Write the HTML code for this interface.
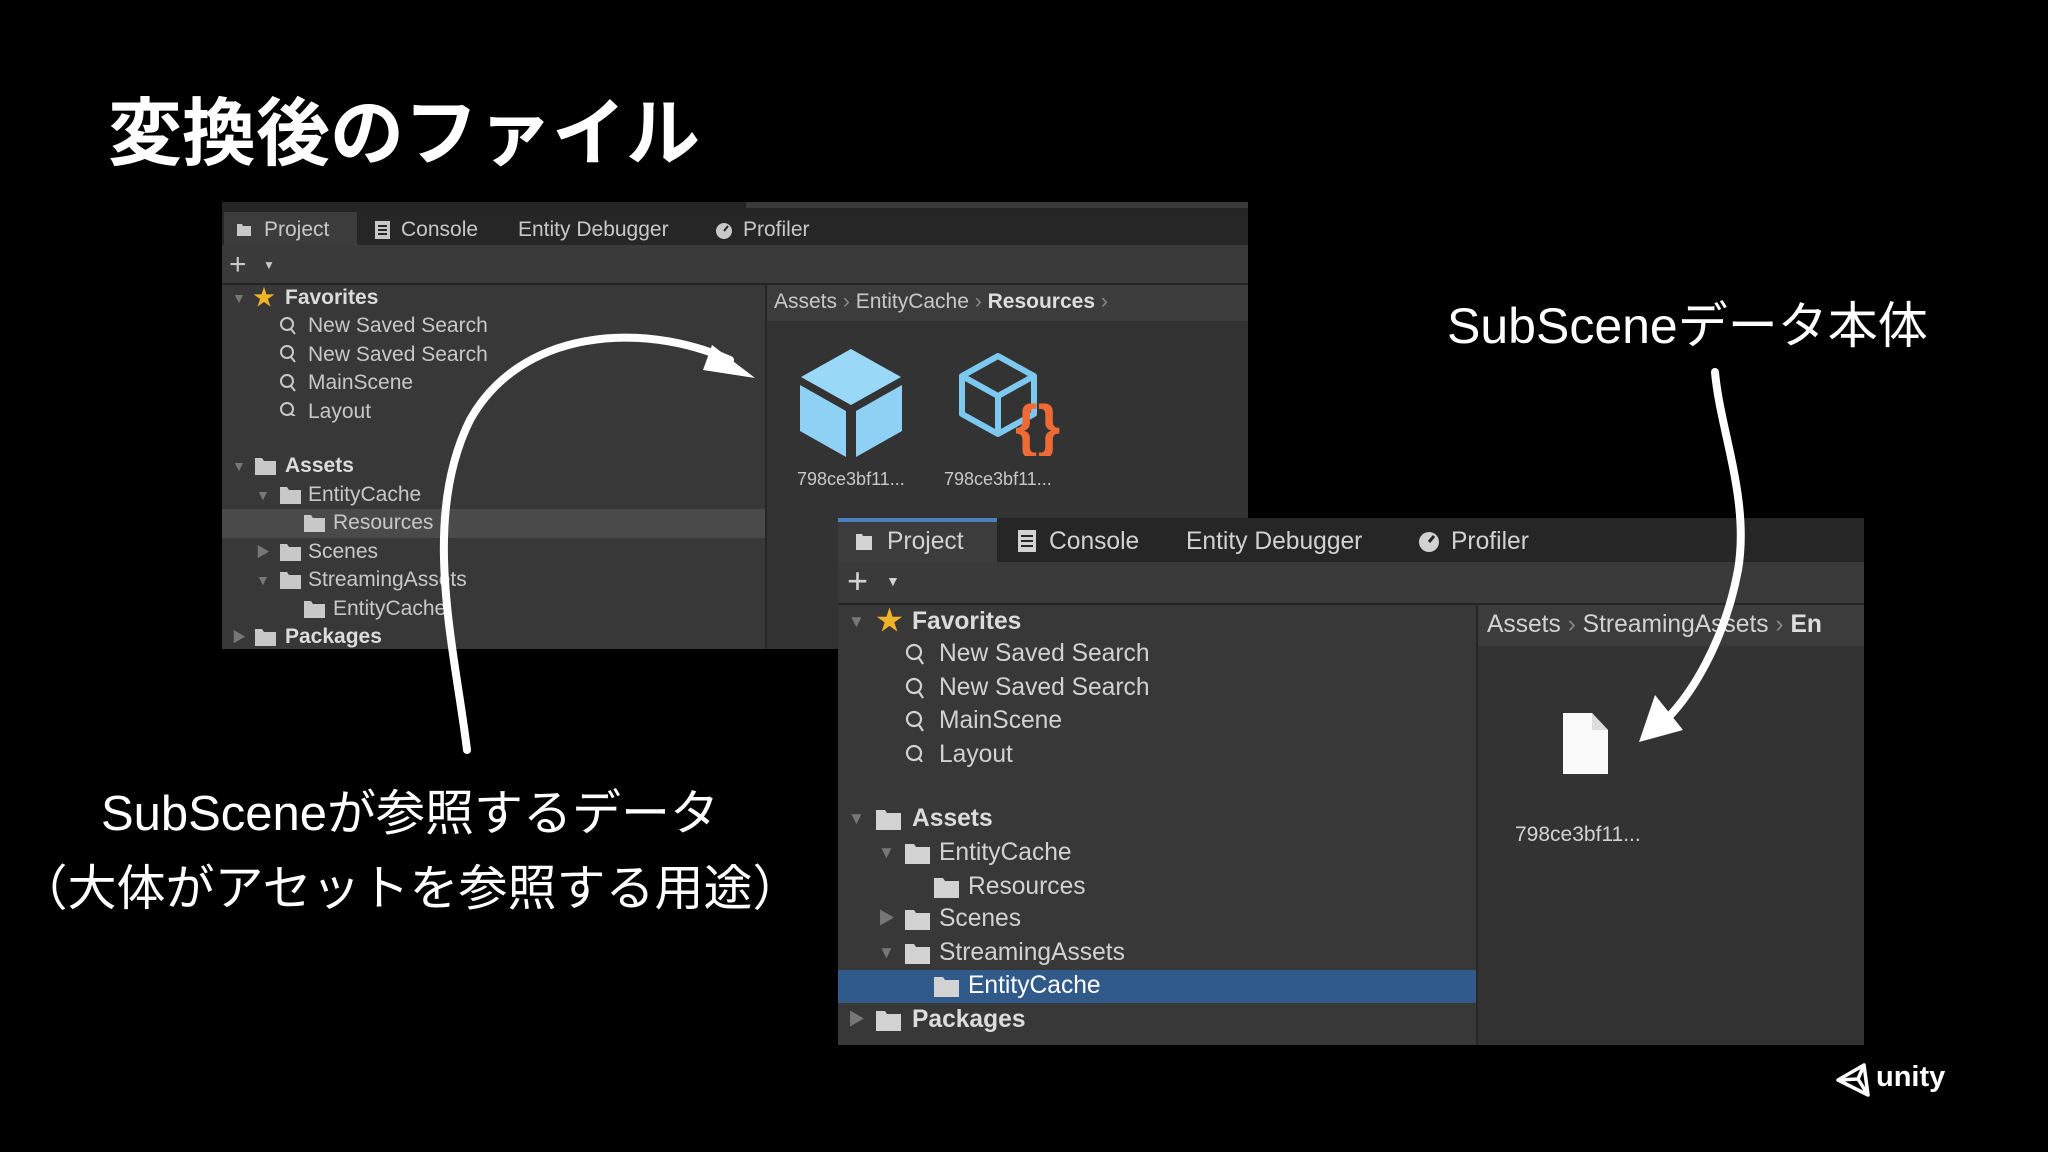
<!DOCTYPE html>
<html><head><meta charset="utf-8"><style>
body{margin:0;width:2048px;height:1152px;background:#000;overflow:hidden;position:relative;font-family:"Liberation Sans","Noto Sans CJK JP",sans-serif;}
.a{position:absolute;white-space:nowrap}
.t1{font-size:21px;color:#c8c8c8;line-height:28px;height:28px}
.t2{font-size:24.6px;color:#d2d2d2;line-height:34px;height:34px}
.b{font-weight:bold;color:#dcdcdc}
svg.i{position:absolute}
</style></head><body>

<div class="a" style="left:108px;top:74px;font-size:74px;font-weight:bold;color:#fff;font-family:'Noto Sans CJK JP',sans-serif;">変換後のファイル</div>

<div class="a" style="left:222px;top:202px;width:1026px;height:447px;background:#383838;overflow:hidden">
  <div class="a" style="left:0;top:0;width:1026px;height:10px;background:#242424"></div>
  <div class="a" style="left:524px;top:0;width:502px;height:6px;background:#3a3a3a"></div>
  <div class="a" style="left:0;top:10px;width:1026px;height:33px;background:#262626"></div>
  <div class="a" style="left:2px;top:10px;width:133px;height:33px;background:#3c3c3c"></div>
  <div class="a" style="left:0;top:43px;width:1026px;height:38px;background:#3a3a3a;border-bottom:2px solid #252525"></div>
  <div class="a" style="left:543px;top:83px;width:2px;height:364px;background:#262626"></div>
  <div class="a" style="left:545px;top:83px;width:481px;height:364px;background:#333"></div>
  <div class="a" style="left:545px;top:83px;width:481px;height:36px;background:#3c3c3c"></div>
  <div class="a" style="left:0;top:307px;width:543px;height:29px;background:#4a4a4a"></div>
</div>
<div class="a t1" style="left:264px;top:216px;">Project</div>
<div class="a t1" style="left:401px;top:216px;">Console</div>
<div class="a t1" style="left:518px;top:216px;">Entity Debugger</div>
<div class="a t1" style="left:743px;top:216px;">Profiler</div>
<svg class="i" style="left:236px;top:222px" width="16" height="16"><path d="M1 2h5l1 2h8v10H1z" fill="#c8c8c8"/></svg>
<svg class="i" style="left:374px;top:220px" width="18" height="20"><rect x="1" y="1" width="15" height="18" fill="#c8c8c8"/><path d="M4 6h9M4 10h9M4 14h9" stroke="#262626" stroke-width="2"/></svg>
<svg class="i" style="left:714px;top:220px" width="20" height="20"><circle cx="10" cy="11" r="8" fill="#c8c8c8"/><path d="M10 11l4-5" stroke="#262626" stroke-width="2"/></svg>
<div class="a" style="left:229px;top:250px;font-size:30px;color:#c8c8c8;line-height:30px">+</div>
<div class="a" style="left:263px;top:258px;font-size:12px;color:#c8c8c8">▼</div>

<div class="a t1" style="left:232px;top:284px;font-size:14px;color:#777">▼</div>
<div class="a" style="left:253px;top:284px;font-size:22px;color:#f0b429;line-height:28px">★</div>
<div class="a t1 b" style="left:285px;top:284px;">Favorites</div>
<div class="a t1" style="left:308px;top:312px;">New Saved Search</div>
<div class="a t1" style="left:308px;top:341px;">New Saved Search</div>
<div class="a t1" style="left:308px;top:369px;">MainScene</div>
<div class="a t1" style="left:308px;top:398px;">Layout</div>
<div class="a t1" style="left:232px;top:452px;font-size:14px;color:#777">▼</div>
<div class="a t1 b" style="left:285px;top:452px;">Assets</div>
<div class="a t1" style="left:256px;top:481px;font-size:14px;color:#777">▼</div>
<div class="a t1" style="left:308px;top:481px;">EntityCache</div>
<div class="a t1" style="left:333px;top:509px;">Resources</div>
<div class="a t1" style="left:256px;top:538px;font-size:14px;color:#777">▶</div>
<div class="a t1" style="left:308px;top:538px;">Scenes</div>
<div class="a t1" style="left:256px;top:566px;font-size:14px;color:#777">▼</div>
<div class="a t1" style="left:308px;top:566px;">StreamingAssets</div>
<div class="a t1" style="left:333px;top:595px;">EntityCache</div>
<div class="a t1" style="left:232px;top:623px;font-size:14px;color:#777">▶</div>
<div class="a t1 b" style="left:285px;top:623px;">Packages</div>
<svg class="i" style="left:279px;top:316px" width="22" height="100"><g fill="none" stroke="#c8c8c8" stroke-width="2"><circle cx="8" cy="8" r="6"/><path d="M12 13l4 5"/><circle cx="8" cy="36" r="6"/><path d="M12 41l4 5"/><circle cx="8" cy="65" r="6"/><path d="M12 70l4 5"/><circle cx="8" cy="93" r="6"/><path d="M12 98l4 2"/></g></svg>
<svg class="i" style="left:0;top:0" width="400" height="660">
<g fill="#c8c8c8">
<path d="M255 458h7l2 3h12v14h-21z"/>
<path d="M280 487h7l2 3h12v14h-21z"/>
<path d="M304 515h7l2 3h12v14h-21z"/>
<path d="M280 544h7l2 3h12v14h-21z"/>
<path d="M280 572h7l2 3h12v14h-21z"/>
<path d="M304 601h7l2 3h12v14h-21z"/>
<path d="M255 629h7l2 3h12v14h-21z"/>
</g></svg>
<div class="a t1" style="left:774px;top:288px;">Assets <span style="color:#888">›</span> EntityCache <span style="color:#888">›</span> <b style="color:#ddd">Resources</b> <span style="color:#888">›</span></div>
<svg class="i" style="left:798px;top:347px" width="106" height="112"><path d="M2 38L48 64V110L2 84z" fill="#8ed1f5"/><path d="M104 38L58 64V110L104 84z" fill="#8ed1f5"/><path d="M53 2L103 30 53 58 3 30z" fill="#9ad8f8"/></svg>
<svg class="i" style="left:958px;top:352px" width="106" height="104"><g fill="none" stroke="#7cc8ee" stroke-width="6" stroke-linejoin="round"><path d="M40 4L76 24V62L40 82 4 62V24z"/><path d="M4 24L40 44 76 24M40 44V82"/></g><text x="57" y="94" font-size="58" font-weight="bold" fill="#f06a35" font-family="Liberation Sans">{}</text></svg>
<div class="a t1" style="left:797px;top:465px;font-size:18px">798ce3bf11...</div>
<div class="a t1" style="left:944px;top:465px;font-size:18px">798ce3bf11...</div>

<div class="a" style="left:838px;top:518px;width:1026px;height:527px;background:#383838;overflow:hidden">
  <div class="a" style="left:0;top:0;width:1026px;height:44px;background:#262626"></div>
  <div class="a" style="left:0;top:0;width:159px;height:44px;background:#3c3c3c;border-top:4px solid #4a80c0;box-sizing:border-box"></div>
  <div class="a" style="left:0;top:44px;width:1026px;height:41px;background:#3a3a3a;border-bottom:2px solid #252525"></div>
  <div class="a" style="left:638px;top:87px;width:2px;height:440px;background:#262626"></div>
  <div class="a" style="left:640px;top:87px;width:386px;height:440px;background:#333"></div>
  <div class="a" style="left:640px;top:87px;width:386px;height:41px;background:#3c3c3c"></div>
  <div class="a" style="left:0;top:452px;width:638px;height:33px;background:#2f5a8a"></div>
</div>
<div class="a t2" style="left:887px;top:525px;">Project</div>
<div class="a t2" style="left:1049px;top:525px;">Console</div>
<div class="a t2" style="left:1186px;top:525px;">Entity Debugger</div>
<div class="a t2" style="left:1451px;top:525px;">Profiler</div>
<svg class="i" style="left:855px;top:532px" width="18" height="20"><path d="M1 2h6l1 2h9v14H1z" fill="#d2d2d2"/></svg>
<svg class="i" style="left:1017px;top:529px" width="20" height="24"><rect x="1" y="1" width="18" height="22" fill="#d2d2d2"/><path d="M4 7h12M4 12h12M4 17h12" stroke="#262626" stroke-width="2"/></svg>
<svg class="i" style="left:1417px;top:529px" width="24" height="24"><circle cx="12" cy="13" r="10" fill="#d2d2d2"/><path d="M12 13l5-6" stroke="#262626" stroke-width="3"/></svg>
<div class="a" style="left:847px;top:563px;font-size:36px;color:#d2d2d2;line-height:36px">+</div>
<div class="a" style="left:886px;top:573px;font-size:14px;color:#d2d2d2">▼</div>

<div class="a t2" style="left:848px;top:605px;font-size:17px;color:#777">▼</div>
<div class="a" style="left:876px;top:604px;font-size:27px;color:#f0b429;line-height:34px">★</div>
<div class="a t2 b" style="left:912px;top:605px;">Favorites</div>
<div class="a t2" style="left:939px;top:637px;">New Saved Search</div>
<div class="a t2" style="left:939px;top:671px;">New Saved Search</div>
<div class="a t2" style="left:939px;top:704px;">MainScene</div>
<div class="a t2" style="left:939px;top:738px;">Layout</div>
<div class="a t2" style="left:848px;top:802px;font-size:17px;color:#777">▼</div>
<div class="a t2 b" style="left:912px;top:802px;">Assets</div>
<div class="a t2" style="left:878px;top:836px;font-size:17px;color:#777">▼</div>
<div class="a t2" style="left:939px;top:836px;">EntityCache</div>
<div class="a t2" style="left:968px;top:870px;">Resources</div>
<div class="a t2" style="left:878px;top:902px;font-size:17px;color:#777">▶</div>
<div class="a t2" style="left:939px;top:902px;">Scenes</div>
<div class="a t2" style="left:878px;top:936px;font-size:17px;color:#777">▼</div>
<div class="a t2" style="left:939px;top:936px;">StreamingAssets</div>
<div class="a t2" style="left:968px;top:969px;color:#fff">EntityCache</div>
<div class="a t2" style="left:848px;top:1003px;font-size:17px;color:#777">▶</div>
<div class="a t2 b" style="left:912px;top:1003px;">Packages</div>
<svg class="i" style="left:904px;top:642px" width="26" height="120"><g fill="none" stroke="#d2d2d2" stroke-width="2.2"><circle cx="10" cy="10" r="7"/><path d="M15 16l4 6"/><circle cx="10" cy="44" r="7"/><path d="M15 50l4 6"/><circle cx="10" cy="77" r="7"/><path d="M15 83l4 6"/><circle cx="10" cy="111" r="7"/><path d="M15 116l3 4"/></g></svg>
<svg class="i" style="left:0;top:0" width="1000" height="1040"><g fill="#d2d2d2">
<path d="M876 810h9l2 3h14v17h-25z"/>
<path d="M905 844h9l2 3h14v17h-25z"/>
<path d="M934 878h9l2 3h14v17h-25z"/>
<path d="M905 910h9l2 3h14v17h-25z"/>
<path d="M905 944h9l2 3h14v17h-25z"/>
<path d="M934 977h9l2 3h14v17h-25z"/>
<path d="M876 1011h9l2 3h14v17h-25z"/>
</g></svg>
<div class="a t2" style="left:1487px;top:608px;overflow:hidden;width:376px">Assets <span style="color:#888">›</span> StreamingAssets <span style="color:#888">›</span> <b style="color:#ddd">En</b></div>
<svg class="i" style="left:1562px;top:712px" width="48" height="64"><path d="M1 1H30L46 18V62H1z" fill="#fafafa"/><path d="M30 1L46 18H30z" fill="#ddd"/></svg>
<div class="a t2" style="left:1515px;top:818px;font-size:21px">798ce3bf11...</div>

<svg class="i" style="left:0;top:0" width="2048" height="1152">
<g fill="none" stroke="#fff" stroke-width="8" stroke-linecap="round">
<path d="M467 750C455 650 420 520 470 420C520 330 640 320 730 360"/>
<path d="M1715 372C1720 430 1750 500 1738 570C1725 640 1690 700 1660 725"/>
</g>
<path d="M755 378L712 345 703 370z" fill="#fff"/>
<path d="M1639 742L1655 695 1683 730z" fill="#fff"/>
</svg>

<div class="a" style="left:1447px;top:286px;font-size:50px;color:#fff">SubSceneデータ本体</div>
<div class="a" style="left:0;width:820px;text-align:center;top:774px;font-size:49px;color:#fff">SubSceneが参照するデータ</div>
<div class="a" style="left:0;width:820px;text-align:center;top:849px;font-size:49px;color:#fff">（大体がアセットを参照する用途）</div>

<svg class="i" style="left:1834px;top:1061px" width="40" height="38"><g fill="none" stroke="#fff" stroke-width="3.5" stroke-linejoin="round"><path d="M4 19L30 4 34 34z"/><path d="M4 19L24 18 30 4M24 18L34 34"/></g></svg>
<div class="a" style="left:1876px;top:1061px;font-size:29px;font-weight:bold;color:#fff">unity</div>
</body></html>
